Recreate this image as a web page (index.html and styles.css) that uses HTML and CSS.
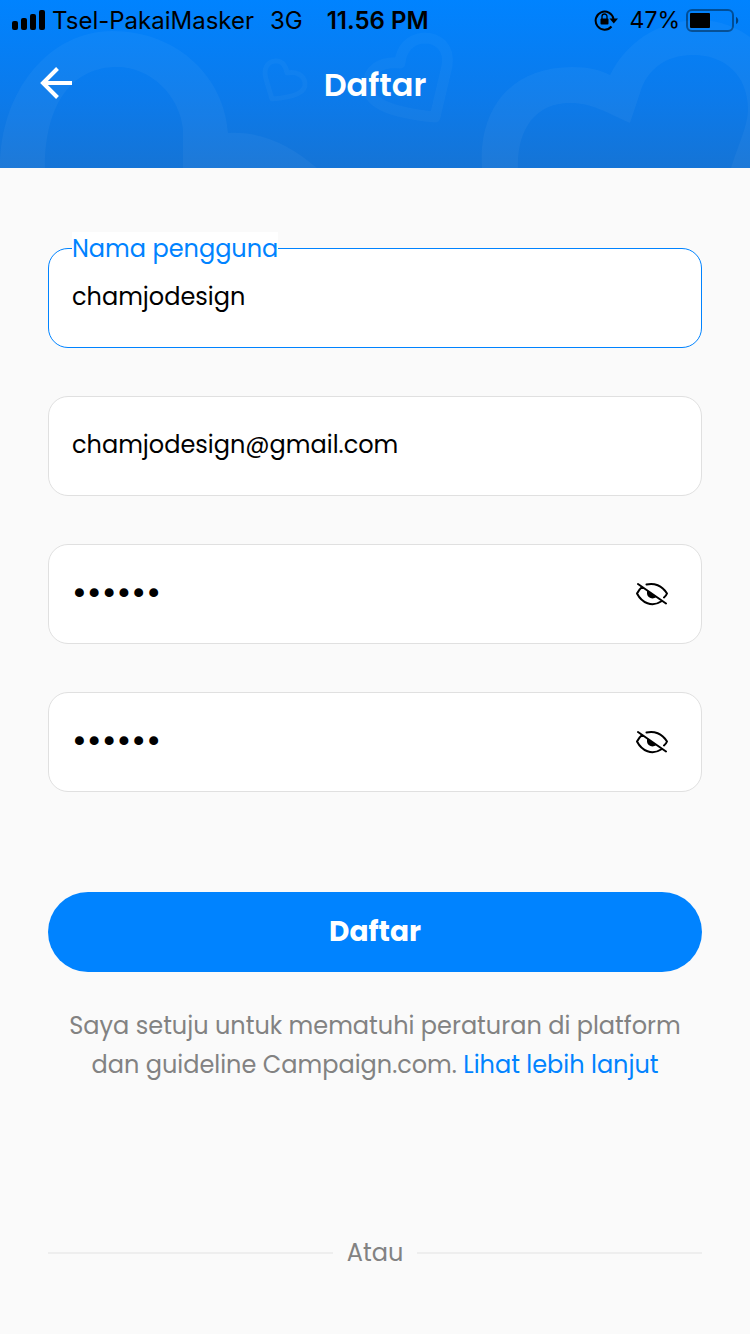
FILE: index.html
```
<!DOCTYPE html>
<html lang="id">
<head>
<meta charset="utf-8">
<meta name="viewport" content="width=device-width, initial-scale=1">
<title>Daftar</title>
<link rel="stylesheet" href="styles.css">
</head>
<body>
<header class="header">
  <svg class="hearts" viewBox="0 0 750 168" preserveAspectRatio="xMidYMid slice" aria-hidden="true">
    <path class="heart-fill" d="M0 168C0 90 50 31 112 31C180 31 225 80 228 133C262 131 290 145 317 168H183V130C180 95 150 67 117 67C75 67 45 100 45 168Z"/>
    <path class="heart-fill" d="M482 168C478 110 510 67 572 67C590 67 600 70 610 75C625 45 655 20 700 20C720 20 738 28 750 37V168H731C740 140 748 125 748 108C747 75 725 55 693 55C665 55 648 70 641 90L630 123C605 112 592 103 570 103C535 103 517 130 518 168Z"/>
    <path class="heart-line small" d="M272 99L266 79C263 69 267 62 275 61C282 60 286 66 287 73C296 71 304 75 305 83C306 92 296 97 272 99Z"/>
    <path class="heart-line" d="M435 117L447 66C450 47 438 38 424 38C409 39 401 50 400 63C380 61 368 70 368 86C368 105 395 113 435 117Z"/>
  </svg>
  <div class="status">
    <svg class="signal" width="34" height="20" viewBox="0 0 34 20" aria-hidden="true">
      <rect x="0" y="11" width="6" height="9" rx="2"/><rect x="9" y="8" width="6" height="12" rx="2"/><rect x="18" y="4" width="6" height="16" rx="2"/><rect x="27" y="0" width="6" height="20" rx="2"/>
    </svg>
    <span class="carrier">Tsel-PakaiMasker</span>
    <span class="network">3G</span>
    <span class="clock">11.56 PM</span>
    <svg class="lock" width="24" height="22" viewBox="0 0 24 22" aria-hidden="true">
      <path d="M17.500 17.500A9 9 0 1 1 19.500 10" fill="none" stroke="#000" stroke-width="2"/>
      <path d="M15.500 9.500H24L19.800 14.500Z"/>
      <rect x="6.500" y="9.500" width="8" height="6" rx="1"/>
      <path d="M8 10V7.500a2.500 2.500 0 0 1 5 0V10" fill="none" stroke="#000" stroke-width="1.300"/>
    </svg>
    <span class="percent">47%</span>
    <svg class="battery" width="54" height="24" viewBox="0 0 54 24" aria-hidden="true">
      <rect x="2" y="2" width="46" height="21" rx="5" fill="none" stroke="#000" stroke-opacity=".4" stroke-width="2"/>
      <rect x="5" y="5" width="20" height="15" rx="1"/>
      <path d="M51 9C54 10 54 15 51 16Z" fill-opacity=".5"/>
    </svg>
  </div>
  <div class="bar">
    <button class="back" type="button" aria-label="Kembali">
      <svg width="32" height="36" viewBox="0 0 32 36" fill="none" stroke="#fff" stroke-width="4" aria-hidden="true"><path d="M32 16H3M17.500 1.500L3 16L17.500 30.500"/></svg>
    </button>
    <h1 class="title">Daftar</h1>
  </div>
</header>
<main class="main">
  <form class="form">
    <div class="field active">
      <label class="label" for="user">Nama pengguna</label>
      <input class="input" id="user" type="text" value="chamjodesign">
    </div>
    <div class="field">
      <input class="input" type="email" aria-label="Email" value="chamjodesign@gmail.com">
    </div>
    <div class="field">
      <input class="input password" type="password" aria-label="Kata sandi" value="secret">
      <button class="eye" type="button" aria-label="Tampilkan kata sandi">
        <svg width="32" height="24" viewBox="0 0 32 24" aria-hidden="true"><g fill="none" stroke="#000" stroke-width="2" stroke-linecap="round" stroke-linejoin="round"><path d="M10.500 2.500C18 .5 26 3.500 31 11.500Q30 14 28 15.500M6 5Q3 7.500 1 11.500C6 21 16 25.500 25 19.500M2 2L30 21.500"/></g><path d="M11 8.500L20 15C17 18 11 16 11 11Z"/></svg>
      </button>
    </div>
    <div class="field">
      <input class="input password" type="password" aria-label="Ulangi kata sandi" value="secret">
      <button class="eye" type="button" aria-label="Tampilkan kata sandi">
        <svg width="32" height="24" viewBox="0 0 32 24" aria-hidden="true"><g fill="none" stroke="#000" stroke-width="2" stroke-linecap="round" stroke-linejoin="round"><path d="M10.500 2.500C18 .5 26 3.500 31 11.500Q30 14 28 15.500M6 5Q3 7.500 1 11.500C6 21 16 25.500 25 19.500M2 2L30 21.500"/></g><path d="M11 8.500L20 15C17 18 11 16 11 11Z"/></svg>
      </button>
    </div>
    <button class="submit" type="submit">Daftar</button>
  </form>
  <p class="terms">Saya setuju untuk mematuhi peraturan di platform<br>dan guideline Campaign.com. <a class="more" href="#">Lihat lebih lanjut</a></p>
  <div class="divider">Atau</div>
</main>
</body>
</html>
```
FILE: styles.css
```
* {
  box-sizing: border-box;
}

body {
  margin: 0;
  background: #fafafa;
  color: #000;
  font-family: Poppins, Inter, "Noto Sans", sans-serif;
  font-size: 24px;
}

button,
input {
  font: inherit;
  color: inherit;
}

.header {
  position: relative;
  height: 168px;
  overflow: hidden;
  background: linear-gradient(#0083ff, #0c7aea 60%, #1574d6);
}

.hearts {
  position: absolute;
  inset: 0;
  width: 100%;
  height: 100%;
}

.heart-fill {
  fill: rgba(255, 255, 255, 0.04);
}

.heart-line {
  fill: none;
  stroke: rgba(255, 255, 255, 0.03);
  stroke-width: 11px;
  stroke-linejoin: round;
}

.small {
  stroke-width: 5px;
}

.status {
  position: relative;
  display: flex;
  align-items: center;
  height: 40px;
  padding: 0 11px 0 12px;
  font-family: Inter, sans-serif;
  font-size: 24px;
}

.carrier {
  margin-left: 6px;
}

.network {
  margin-left: 16px;
}

.clock {
  margin-left: 24px;
  font-weight: 600;
}

.lock {
  margin-left: auto;
}

.percent {
  margin: 0 5px 0 12px;
  font-size: 23px;
}

.bar {
  position: relative;
  display: grid;
  grid-template-columns: 32px 1fr 32px;
  align-items: center;
  padding: 0 40px;
  height: 90px;
}

.back {
  display: flex;
  padding: 0;
  border: 0;
  background: none;
}

.title {
  margin: 0;
  color: #fff;
  font-size: 32px;
  font-weight: 600;
  text-align: center;
}

.main {
  padding: 80px 48px 64px;
}

.form {
  display: flex;
  flex-direction: column;
  gap: 48px;
}

.field {
  position: relative;
  display: flex;
  align-items: center;
  height: 100px;
  padding: 0 33px 0 23px;
  border: 1px solid #e0e0e0;
  border-radius: 20px;
  background: #fff;
}

.active {
  border-color: #0083ff;
}

.label {
  position: absolute;
  top: -17px;
  left: 23px;
  background: #fff;
  color: #0083ff;
  line-height: 34px;
}

.input {
  flex: 1;
  min-width: 0;
  height: 60px;
  padding: 0 0 4px;
  border: 0;
  outline: 0;
  background: none;
}

.password {
  font-size: 36px;
}

.eye {
  display: flex;
  padding: 0;
  border: 0;
  background: none;
}

.submit {
  height: 80px;
  margin-top: 52px;
  border: 0;
  border-radius: 40px;
  background: #0083ff;
  color: #fff;
  font-size: 28px;
  font-weight: 700;
}

.terms {
  margin: 34px 0 0;
  color: #828282;
  line-height: 39px;
  text-align: center;
}

.more {
  color: #0083ff;
  text-decoration: none;
}

.divider {
  display: flex;
  align-items: center;
  gap: 14px;
  margin-top: 152px;
  color: #828282;
  line-height: 34px;
}

.divider::before,
.divider::after {
  flex: 1;
  height: 2px;
  background: #eee;
  content: "";
}
```
